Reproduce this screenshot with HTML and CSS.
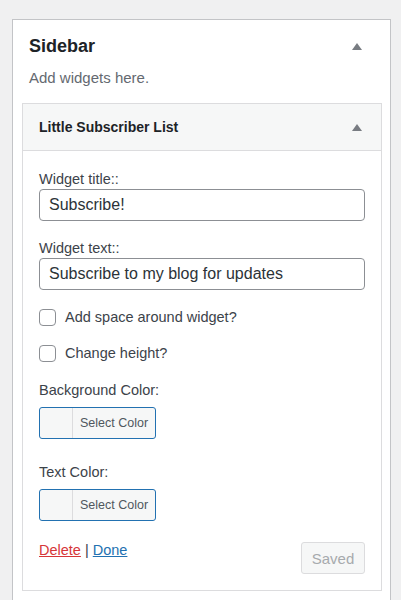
FILE: index.html
```html
<!DOCTYPE html>
<html lang="en">
<head>
  <meta charset="UTF-8">
  <title>Widgets</title>
  <link rel="stylesheet" href="styles.css">
</head>
<body>

  <div class="sidebar">
    <div class="sidebar-head">
      <h2>Sidebar</h2>
      <span class="toggle"><svg width="10" height="7" viewBox="0 0 10 7"><path d="M5 0 L10 7 L0 7 Z" fill="#787c82"/></svg></span>
    </div>
    <p class="sidebar-desc">Add widgets here.</p>

    <div class="widget">
      <div class="widget-head">
        <h3>Little Subscriber List</h3>
        <span class="toggle"><svg width="10" height="7" viewBox="0 0 10 7"><path d="M5 0 L10 7 L0 7 Z" fill="#787c82"/></svg></span>
      </div>

      <form class="widget-body">
        <label class="field-label">Widget title::</label>
        <input type="text" class="text-input" value="Subscribe!">

        <label class="field-label">Widget text::</label>
        <input type="text" class="text-input" value="Subscribe to my blog for updates">

        <label class="check-row"><input type="checkbox"> Add space around widget?</label>
        <label class="check-row"><input type="checkbox"> Change height?</label>

        <label class="field-label color-label">Background Color:</label>
        <button type="button" class="color-btn"><span class="swatch"></span><span class="color-text">Select Color</span></button>

        <label class="field-label color-label text-color">Text Color:</label>
        <button type="button" class="color-btn"><span class="swatch"></span><span class="color-text">Select Color</span></button>

        <div class="widget-foot">
          <div class="links">
            <a href="#" class="delete">Delete</a> | <a href="#" class="done">Done</a>
          </div>
          <button type="button" class="saved-btn" disabled>Saved</button>
        </div>
      </form>
    </div>
  </div>

</body>
</html>
```

FILE: styles.css
```css
body {
  margin: 0;
  padding: 0;
  background-color: #f0f0f1;
  font-family: "Liberation Sans", Arial, sans-serif;
  color: #3c434a;
}

.sidebar {
  box-sizing: border-box;
  width: 379px;
  min-height: 600px;
  margin: 19px 0 0 12px;
  padding: 0 8px 0 9px;
  background-color: #fff;
  border: 1px solid #c3c4c7;
}

.sidebar-head {
  display: flex;
  justify-content: space-between;
  align-items: center;
  padding: 14px 0 0 7px;
}

.sidebar-head h2 {
  margin: 0;
  font-size: 18px;
  line-height: 24px;
  font-weight: bold;
  color: #1d2327;
}

.toggle {
  display: flex;
  width: 10px;
  height: 7px;
  margin-right: 20px;
}

.sidebar-desc {
  margin: 10px 0 15px 7px;
  font-size: 15px;
  line-height: 20px;
  color: #646970;
}

.widget {
  border: 1px solid #dcdcde;
  background-color: #fff;
}

.widget-head {
  display: flex;
  justify-content: space-between;
  align-items: center;
  height: 46px;
  padding: 0 0 0 16px;
  background-color: #f6f7f7;
  border-bottom: 1px solid #dcdcde;
}

.widget-head h3 {
  margin: 0;
  font-size: 14px;
  font-weight: bold;
  color: #1d2327;
}

.widget-head .toggle {
  margin-right: 19px;
}

.widget-body {
  display: flex;
  flex-direction: column;
  align-items: flex-start;
  padding: 18px 16px 16px;
}

.field-label {
  font-size: 14.5px;
  line-height: 20px;
  color: #3c434a;
}

.text-input {
  box-sizing: border-box;
  width: 100%;
  height: 32px;
  margin: 0 0 17px;
  padding: 0 9px;
  font-family: inherit;
  font-size: 16px;
  color: #2c3338;
  border: 1px solid #8c8f94;
  border-radius: 4px;
  background-color: #fff;
}

.check-row {
  display: flex;
  align-items: center;
  gap: 9px;
  font-size: 14.5px;
  line-height: 20px;
  margin-bottom: 16px;
}

.check-row input {
  appearance: none;
  box-sizing: border-box;
  width: 17px;
  height: 17px;
  margin: 0;
  border: 1px solid #8c8f94;
  border-radius: 4px;
  background-color: #fff;
}

.color-label {
  margin-top: 1px;
  margin-bottom: 7px;
}

.text-color {
  margin-top: 23px;
}

.color-btn {
  display: flex;
  align-items: stretch;
  box-sizing: border-box;
  width: 117px;
  height: 32px;
  padding: 0;
  border: 1px solid #2271b1;
  border-radius: 3px;
  background-color: #f6f7f7;
  font-family: inherit;
  cursor: pointer;
}

.swatch {
  width: 32px;
  border-right: 1px solid #dcdcde;
}

.color-text {
  flex: 1;
  display: flex;
  align-items: center;
  justify-content: center;
  font-size: 12.5px;
  color: #50575e;
}

.widget-foot {
  display: flex;
  justify-content: space-between;
  align-items: flex-start;
  width: 100%;
  margin-top: 19px;
}

.links {
  font-size: 14.5px;
  line-height: 20px;
  color: #3c434a;
}

.delete {
  color: #d63638;
}

.done {
  color: #2271b1;
}

.saved-btn {
  box-sizing: border-box;
  width: 64px;
  height: 32px;
  margin-top: 2px;
  border: 1px solid #dcdcde;
  border-radius: 3px;
  background-color: #f6f7f7;
  color: #a7aaad;
  font-family: inherit;
  font-size: 15px;
}
```
